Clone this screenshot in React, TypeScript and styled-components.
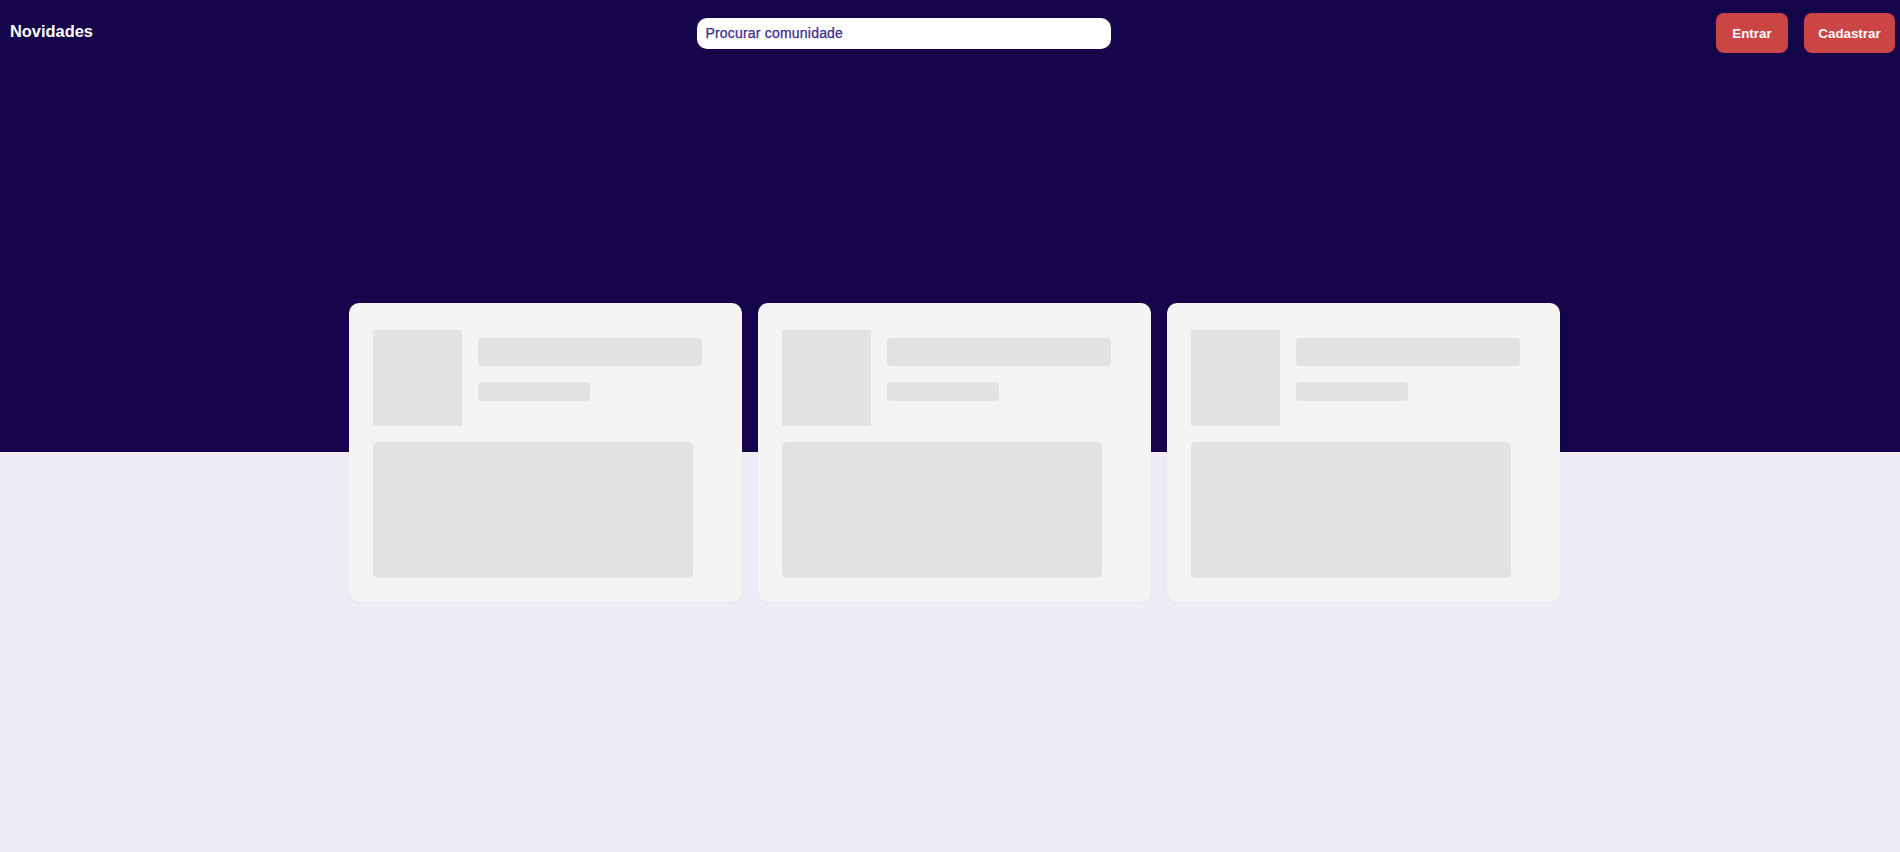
import { createGlobalStyle } from 'styled-components'
import styled from 'styled-components'

const GlobalStyle = createGlobalStyle`
  * {
    box-sizing: border-box;
  }
  body {
    margin: 0;
    font-family: "Liberation Sans", Arial, sans-serif;
    background: #efecf6;
  }
`

const Page = styled.div`
  min-height: 100vh;
  background: linear-gradient(to bottom, #15054a 0, #15054a 452px, #efecf6 452px);
`

const Header = styled.header`
  height: 66px;
  display: flex;
  align-items: center;
  justify-content: space-between;
  padding: 0 5px 0 10px;
`

const Brand = styled.h1`
  margin: 0 0 4px;
  font-size: 16.4px;
  font-weight: 700;
  color: #ffffff;
`

const Search = styled.input`
  width: 414px;
  height: 31px;
  border: none;
  border-radius: 10px;
  padding: 0 8px;
  background: #ffffff;
  font-family: "Liberation Sans", Arial, sans-serif;
  font-size: 14px;
  letter-spacing: 0.2px;
  color: #3b2a8e;
  -webkit-text-stroke: 0.25px #3b2a8e;
  outline: none;

  &::placeholder {
    color: #3b2a8e;
    opacity: 1;
  }
`

const Actions = styled.div`
  display: flex;
  gap: 16px;
`

const Button = styled.button<{ $w: number }>`
  width: ${(p) => p.$w}px;
  height: 40px;
  padding: 0;
  border: none;
  border-radius: 8px;
  background: #cc4545;
  color: #ffffff;
  font-family: "Liberation Sans", Arial, sans-serif;
  font-size: 13.33px;
  font-weight: 700;
  cursor: pointer;
`

const Feed = styled.section`
  display: flex;
  justify-content: center;
  gap: 16px;
  margin-top: 237px;
  padding-left: 9px;
`

const Card = styled.article`
  width: 393px;
  padding: 27px 24px 24px;
  border-radius: 10px;
  background: #f4f4f4;
  box-shadow: 0 1px 3px rgba(40, 20, 90, 0.05);
`

const CardTop = styled.div`
  display: flex;
  gap: 16px;
`

const Skeleton = styled.div<{ $w: number; $h: number; $r?: number }>`
  width: ${(p) => p.$w}px;
  height: ${(p) => p.$h}px;
  border-radius: ${(p) => p.$r ?? 4}px;
  background: #e2e2e2;
  flex-shrink: 0;
`

const Lines = styled.div`
  display: flex;
  flex-direction: column;
  gap: 16px;
  padding-top: 8px;
`

const Body = styled(Skeleton)`
  margin-top: 16px;
`

function SkeletonCard() {
  return (
    <Card>
      <CardTop>
        <Skeleton $w={89} $h={96} $r={0} />
        <Lines>
          <Skeleton $w={224} $h={28} />
          <Skeleton $w={112} $h={19} />
        </Lines>
      </CardTop>
      <Body $w={320} $h={136} $r={5} />
    </Card>
  )
}

export default function App() {
  return (
    <Page>
      <GlobalStyle />
      <Header>
        <Brand>Novidades</Brand>
        <Search placeholder="Procurar comunidade" />
        <Actions>
          <Button $w={72}>Entrar</Button>
          <Button $w={91}>Cadastrar</Button>
        </Actions>
      </Header>
      <Feed>
        <SkeletonCard />
        <SkeletonCard />
        <SkeletonCard />
      </Feed>
    </Page>
  )
}
